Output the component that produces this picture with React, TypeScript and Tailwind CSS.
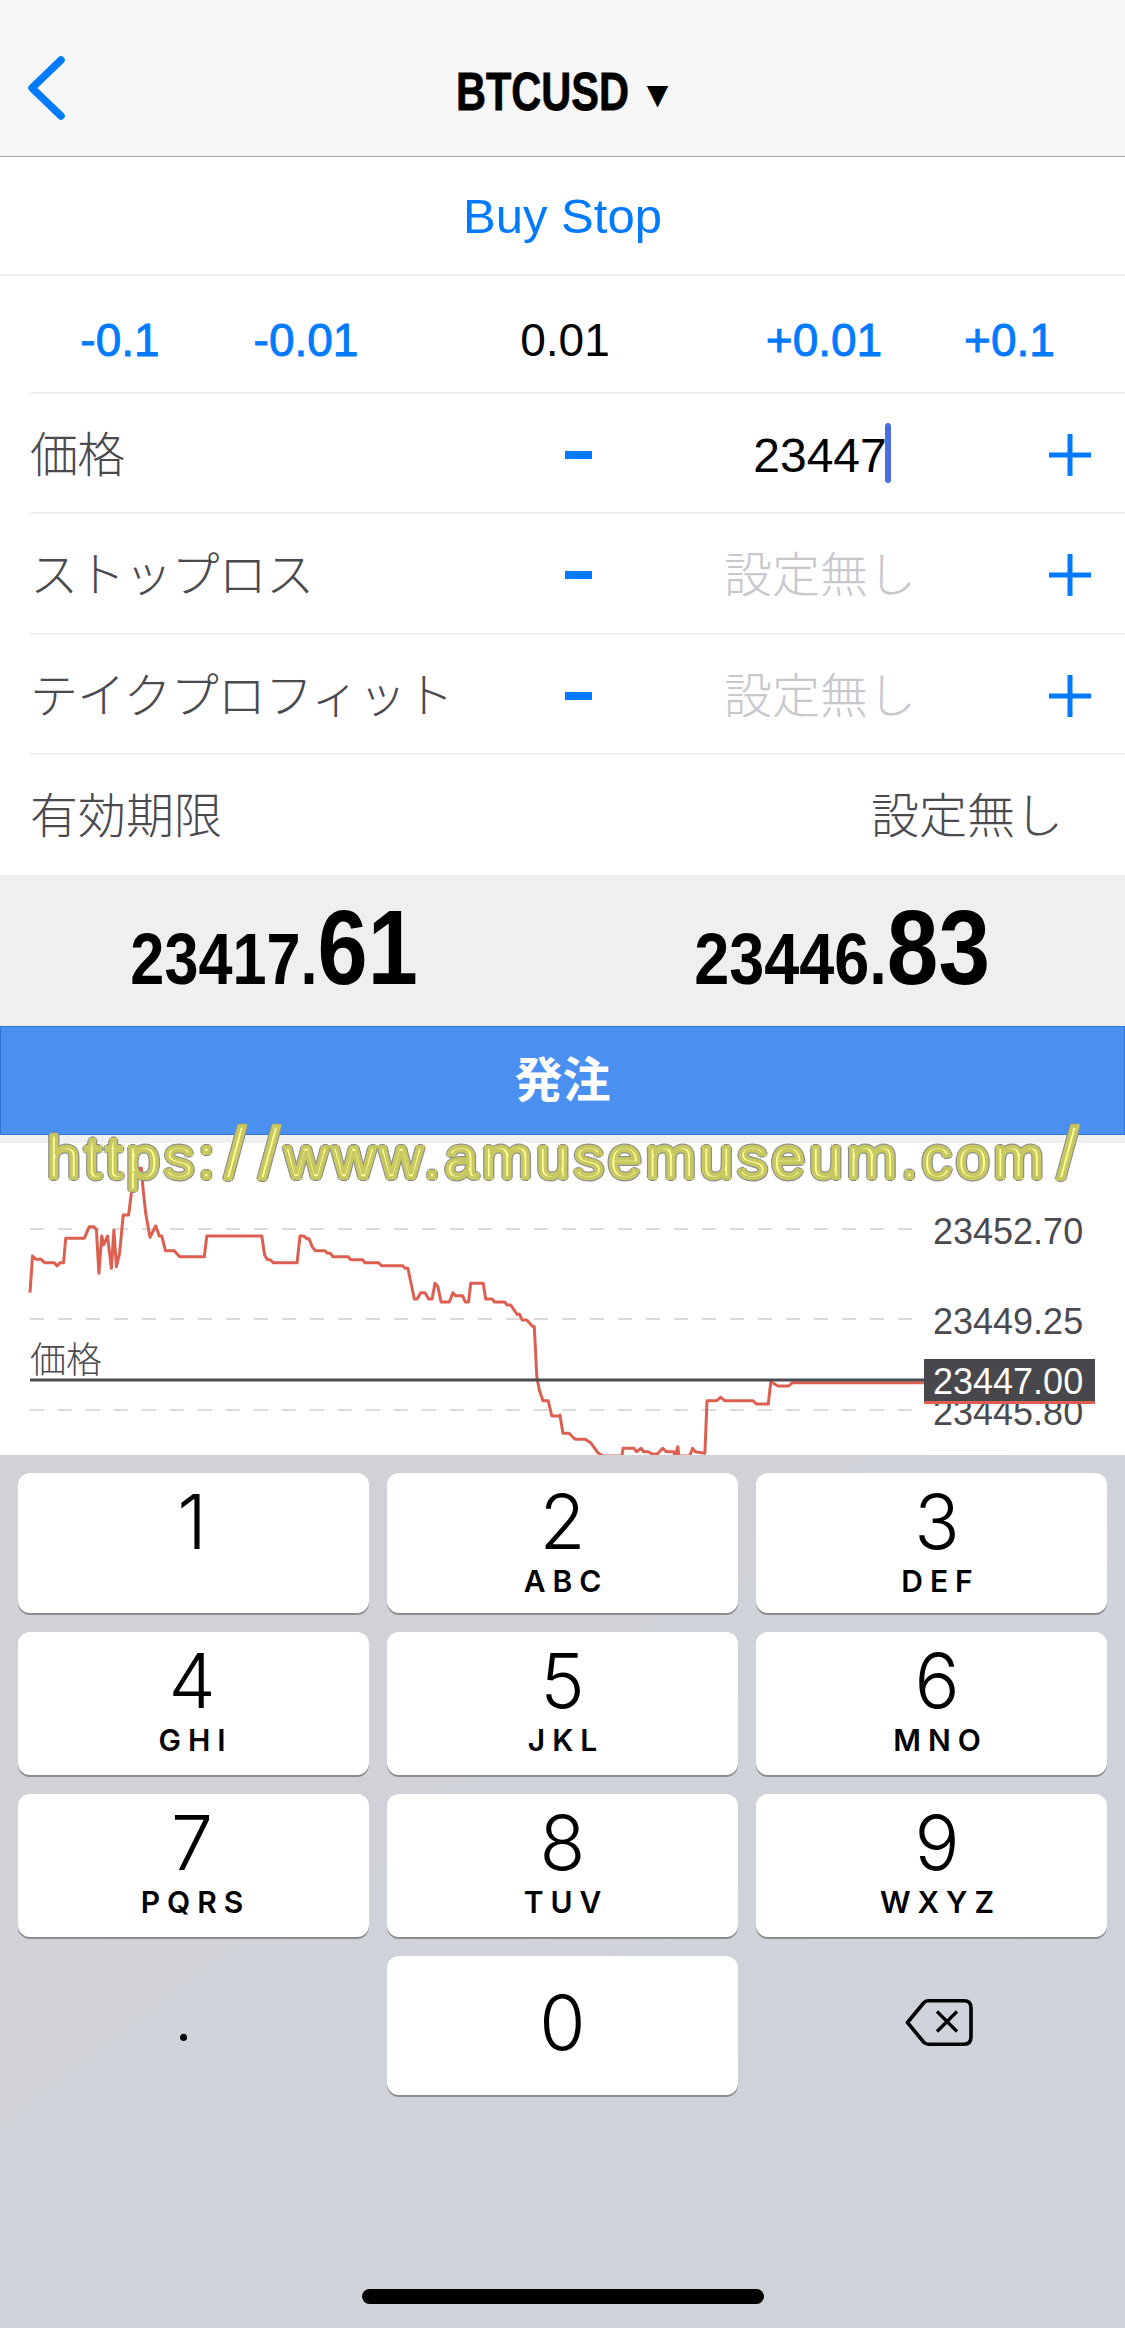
import React from "react";

const leftPts: [number, number][] = [[84,488],[91,378],[100,388],[115,388],[125,398],[152,398],[160,408],[168,398],[178,398],[184,325],[236,325],[250,290],[262,290],[270,298],[277,430],[285,318],[290,345],[301,318],[312,415],[319,300],[326,410],[335,370],[345,255],[360,255],[370,172],[380,172],[388,115],[396,115],[400,172],[408,250],[420,322],[436,288],[446,318],[453,318],[463,362],[488,362],[503,380],[572,380],[579,318],[733,318],[741,375],[748,388],[757,390],[765,398],[832,398],[840,318],[850,318],[860,326],[865,326],[875,352],[883,362],[910,362],[917,370],[925,370],[932,380],[975,380],[982,389],[1015,389],[1022,398],[1060,398],[1068,407],[1127,407],[1135,415],[1142,415],[1160,507],[1168,507],[1178,488],[1190,488],[1200,507],[1210,507],[1218,460],[1226,470],[1235,516],[1258,516],[1268,488],[1275,497],[1295,497],[1303,516],[1312,516],[1318,460],[1353,460],[1360,507],[1378,507],[1385,516],[1413,516],[1420,525],[1430,525],[1448,553],[1455,553],[1462,570],[1475,570],[1490,588],[1496,590],[1503,740],[1510,780],[1520,812],[1535,812],[1545,858],[1568,858]];
const rightPts: [number, number][] = [[0,855],[8,910],[25,910],[42,928],[70,928],[85,938],[105,968],[120,978],[172,978],[175,955],[205,955],[212,965],[225,955],[232,965],[245,965],[255,972],[270,972],[285,955],[295,965],[315,965],[320,978],[327,950],[330,978],[360,978],[368,955],[375,965],[402,970],[408,812],[435,812],[445,802],[458,812],[535,812],[545,822],[578,822],[585,755],[605,768],[635,768],[645,758],[1010,758]];
const linePoints = [
  ...leftPts.map(([x, y]) => `${(x / 2.8).toFixed(1)},${(y / 3 - 13).toFixed(1)}`),
  ...rightPts.map(([x, y]) => `${(560 + x / 2.775).toFixed(1)},${(y / 3 - 13).toFixed(1)}`),
].join(" ");

function Plus() {
  return (
    <svg width="44" height="44" viewBox="0 0 44 44" className="block">
      <path d="M22 1V43M1 22H43" stroke="#007aff" strokeWidth="5" fill="none" />
    </svg>
  );
}

function AdjustRow({ label, h, children }: { label: string; h: string; children: React.ReactNode }) {
  return (
    <div className={`ml-[30px] shrink-0 border-b-2 border-[#f0f0f0] grid grid-cols-[510px_76px_408px_92px] items-center pt-[3px] ${h}`}>
      <div className="text-[48px] leading-none font-light tracking-[-0.8px] text-[#4a4a4f] translate-y-[1px]">{label}</div>
      <div className="flex justify-center"><div className="w-[27px] h-[8px] bg-[#007aff]" /></div>
      <div className="flex justify-center text-[48px] leading-none translate-y-[1px]">{children}</div>
      <div className="flex justify-center"><Plus /></div>
    </div>
  );
}

function Key({ digit, letters, shift = "" }: { digit: string; letters?: string; shift?: string }) {
  return (
    <div className={`h-full rounded-[12px] bg-white shadow-[0_2px_0_#8b8c90] flex flex-col items-center pt-[11px] ${shift}`}>
      <div className="text-[75px] leading-[76px] font-[350] text-black">{digit}</div>
      {letters ? (
        <div className="text-[30px] leading-[30px] font-semibold tracking-[7px] pl-[7px] mt-[6px] text-black">{letters}</div>
      ) : null}
    </div>
  );
}

function PriceLabel({ text, top }: { text: string; top: string }) {
  return <div className={`absolute left-[933px] text-[36px] leading-none text-[#4a4a4f] ${top}`}>{text}</div>;
}

export default function App() {
  return (
    <div className="relative w-[1125px] h-[2328px] overflow-hidden flex flex-col bg-white font-['Liberation_Sans','Noto_Sans_CJK_JP',sans-serif]">
      {/* nav bar */}
      <div className="h-[157px] shrink-0 bg-[#f7f7f7] border-b border-[#aaaaaa] flex items-center justify-center relative pt-[25px] pr-[27px]">
        <svg width="44" height="72" viewBox="0 0 44 72" className="absolute left-[24px] top-[52px]">
          <path d="M37 8L8 36L37 64" stroke="#007aff" strokeWidth="7.5" strokeLinecap="round" strokeLinejoin="round" fill="none" />
        </svg>
        <span className="inline-block scale-x-[0.77] text-[54px] leading-none font-bold text-black [-webkit-text-stroke:0.8px_#000]">BTCUSD</span>
        <span className="inline-block text-[28px] leading-none text-black -ml-[8px] mt-[8px] font-['DejaVu_Sans',sans-serif]">▼</span>
      </div>

      {/* order type */}
      <div className="h-[119px] shrink-0 border-b-2 border-[#f0f0f0] pt-[2px] flex items-center justify-center text-[49px] leading-none text-[#007aff]">
        Buy Stop
      </div>

      {/* volume steppers */}
      <div className="h-[118px] shrink-0 border-b-2 border-[#f0f0f0] ml-[30px] pt-[12px] grid grid-cols-[180px_192px_326px_192px_1fr] items-center text-center text-[46px] leading-none text-[#007aff] [-webkit-text-stroke:0.9px_#007aff]">
        <div>-0.1</div>
        <div>-0.01</div>
        <div className="text-black [-webkit-text-stroke:0_#000]">0.01</div>
        <div>+0.01</div>
        <div className="pr-[26px]">+0.1</div>
      </div>

      <AdjustRow label="価格" h="h-[120px]">
        <span className="relative text-black">
          23447
          <span className="absolute -right-[4px] -top-[9px] w-[6px] h-[60px] rounded-full bg-[#4a6ee0]" />
        </span>
      </AdjustRow>
      <AdjustRow label="ストップロス" h="h-[121px]">
        <span className="text-[#c7c7cc] font-light">設定無し</span>
      </AdjustRow>
      <AdjustRow label="テイクプロフィット" h="h-[120px]">
        <span className="text-[#c7c7cc] font-light">設定無し</span>
      </AdjustRow>
      <div className="ml-[30px] h-[120px] shrink-0 pt-[3px] flex items-center justify-between pr-[62px] text-[48px] leading-none font-light text-[#4a4a4f]">
        <span>有効期限</span>
        <span>設定無し</span>
      </div>

      {/* quotes */}
      <div className="h-[151px] shrink-0 bg-[#efefef] grid grid-cols-2 items-end pb-[26px] font-bold text-black">
        <div className="flex justify-center pr-[15px]">
          <span className="inline-block scale-x-[0.85] whitespace-nowrap leading-none">
            <span className="text-[72px]">23417.</span>
            <span className="text-[106px]">61</span>
          </span>
        </div>
        <div className="flex justify-center pr-[4px]">
          <span className="inline-block scale-x-[0.875] whitespace-nowrap leading-none">
            <span className="text-[72px]">23446.</span>
            <span className="text-[106px]">83</span>
          </span>
        </div>
      </div>

      {/* submit */}
      <div className="h-[109px] shrink-0 bg-[#4a90f0] border border-[#2f77d9] flex items-center justify-center text-[48px] leading-none font-bold text-white">
        発注
      </div>
      <div className="h-[8px] shrink-0 bg-[#f0f0f0]" />

      {/* chart */}
      <div className="relative h-[312px] shrink-0 overflow-hidden">
        <svg width="1125" height="312" viewBox="0 0 1125 312" className="absolute inset-0">
          <g stroke="#cfcfcf" strokeWidth="1.5" strokeDasharray="14 14">
            <line x1="30" x2="924" y1="86" y2="86" />
            <line x1="30" x2="924" y1="176" y2="176" />
            <line x1="30" x2="924" y1="267" y2="267" />
          </g>
          <polyline points={linePoints} fill="none" stroke="#dd5f50" strokeWidth="3" strokeLinejoin="round" />
          <line x1="30" x2="924" y1="237" y2="237" stroke="#4a4a4f" strokeWidth="3" />
        </svg>
        <div className="absolute left-[30px] top-[200px] text-[36px] leading-none font-light text-[#4a4a4f]">価格</div>
        <PriceLabel text="23452.70" top="top-[71px]" />
        <PriceLabel text="23449.25" top="top-[161px]" />
        <PriceLabel text="23445.80" top="top-[252px]" />
        <div className="absolute left-[924px] top-[216px] w-[171px] h-[45px] bg-[#47474c] border-b-[3px] border-[#dd5f50] pl-[9px] pt-[5px] text-[36px] leading-none text-white">
          23447.00
        </div>
      </div>

      {/* keyboard */}
      <div className="flex-1 relative bg-linear-to-br from-[#d1d2d6] to-[#ced3dc] pt-[18px] px-[18px] font-['Inter',sans-serif]">
        <div className="grid grid-cols-3 gap-x-[18px] gap-y-[19px] grid-rows-[140px_143px_143px_139px]">
          <Key digit="1" shift="pr-[3px]" />
          <Key digit="2" letters="ABC" />
          <Key digit="3" letters="DEF" shift="pl-[11px]" />
          <Key digit="4" letters="GHI" shift="pr-[3px]" />
          <Key digit="5" letters="JKL" />
          <Key digit="6" letters="MNO" shift="pl-[11px]" />
          <Key digit="7" letters="PQRS" shift="pr-[3px]" />
          <Key digit="8" letters="TUV" />
          <Key digit="9" letters="WXYZ" shift="pl-[11px]" />
          <div className="flex items-center pl-[158px] pb-[6px]">
            <span className="text-[50px] leading-none font-medium text-black">.</span>
          </div>
          <div className="h-full rounded-[12px] bg-white shadow-[0_2px_0_#8b8c90] flex items-center justify-center pb-[6px] text-[75px] leading-none font-[350] text-black">0</div>
          <div className="flex items-center justify-center pb-[6px] pl-[14px]">
            <svg width="68" height="47" viewBox="0 0 68 47">
              <path d="M2.5 23.5L19 3.5Q21 1.8 23.5 1.8H59Q66 1.8 66 9V38Q66 45.2 59 45.2H23.5Q21 45.2 19 43.5Z" fill="none" stroke="#000" strokeWidth="3.6" strokeLinejoin="round" />
              <path d="M32 12.5L52 32.5M52 12.5L32 32.5" fill="none" stroke="#000" strokeWidth="3.2" />
            </svg>
          </div>
        </div>
        <div className="absolute left-[362px] top-[834px] w-[402px] h-[15px] rounded-full bg-black" />
      </div>

      {/* watermark */}
      <div className="absolute left-[47px] top-[1118px] whitespace-nowrap text-[60px] leading-[70px] tracking-[4.2px] text-[#ffff99] [-webkit-text-stroke:3.5px_#c8c860] [text-shadow:3px_0_0_#8f8f8f,-3px_0_0_#8f8f8f,0_3px_0_#8f8f8f,0_-3px_0_#8f8f8f,2px_2px_0_#8f8f8f,-2px_-2px_0_#8f8f8f,2px_-2px_0_#8f8f8f,-2px_2px_0_#8f8f8f]">
        https:<span className="text-[72px] ml-[6px] mr-[10px]">/</span><span className="text-[72px] mr-[1px]">/</span>www.amusemuseum.com<span className="text-[72px] ml-[10px]">/</span>
      </div>
    </div>
  );
}
